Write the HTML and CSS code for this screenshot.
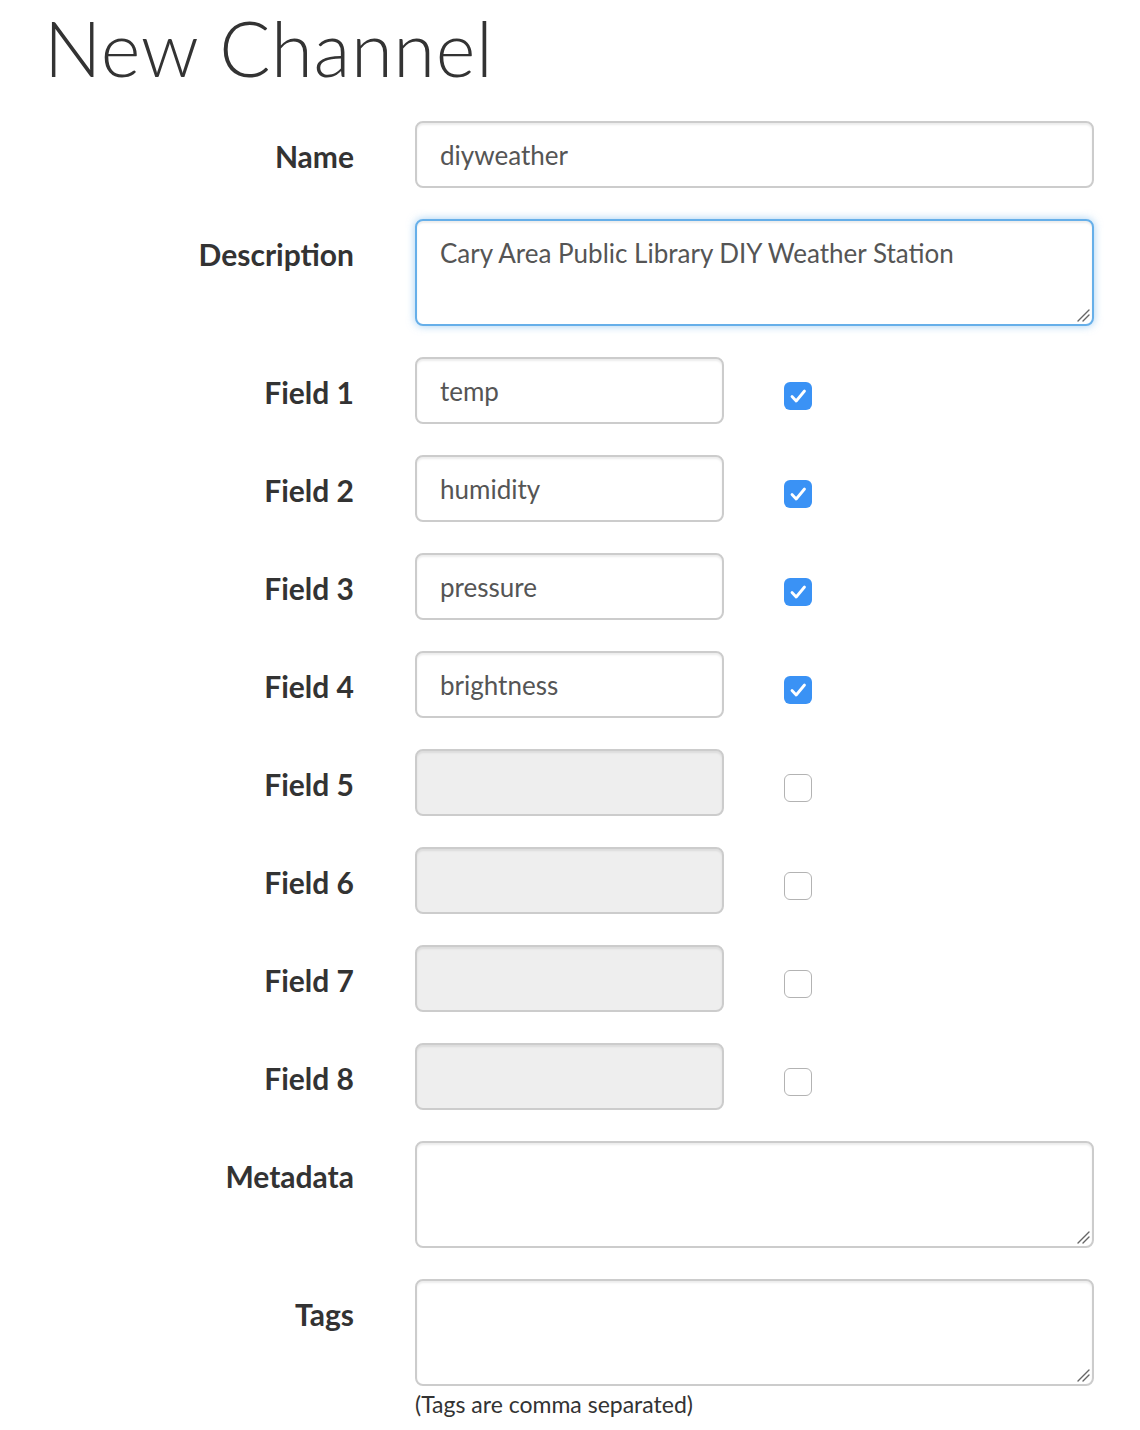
FILE: index.html
```html
<!DOCTYPE html>
<html lang="en">
<head>
<meta charset="utf-8">
<title>New Channel</title>
<link rel="stylesheet" href="styles.css">
</head>
<body>
<div class="page">
  <h1 class="title">New Channel</h1>
  <form class="form">
    <div class="row">
      <label class="label">Name</label>
      <div class="control"><input class="input wide" type="text" value="diyweather"></div>
    </div>
    <div class="row">
      <label class="label">Description</label>
      <div class="control"><div class="area-wrap"><textarea class="input wide area focus">Cary Area Public Library DIY Weather Station</textarea><svg class="grip" viewBox="0 0 14 14" width="14" height="14"><path d="M2 13 L13 2 M7 13 L13 7" stroke="#666" stroke-width="1.4" stroke-linecap="round"/></svg></div></div>
    </div>
    <div class="row">
      <label class="label">Field 1</label>
      <div class="control field"><input class="input short" type="text" value="temp"><span class="check on"><svg viewBox="0 0 28 28" width="28" height="28"><path d="M8 14.5 L12.2 19 L20.5 9" fill="none" stroke="#fff" stroke-width="2.8" stroke-linecap="round" stroke-linejoin="round"/></svg></span></div>
    </div>
    <div class="row">
      <label class="label">Field 2</label>
      <div class="control field"><input class="input short" type="text" value="humidity"><span class="check on"><svg viewBox="0 0 28 28" width="28" height="28"><path d="M8 14.5 L12.2 19 L20.5 9" fill="none" stroke="#fff" stroke-width="2.8" stroke-linecap="round" stroke-linejoin="round"/></svg></span></div>
    </div>
    <div class="row">
      <label class="label">Field 3</label>
      <div class="control field"><input class="input short" type="text" value="pressure"><span class="check on"><svg viewBox="0 0 28 28" width="28" height="28"><path d="M8 14.5 L12.2 19 L20.5 9" fill="none" stroke="#fff" stroke-width="2.8" stroke-linecap="round" stroke-linejoin="round"/></svg></span></div>
    </div>
    <div class="row">
      <label class="label">Field 4</label>
      <div class="control field"><input class="input short" type="text" value="brightness"><span class="check on"><svg viewBox="0 0 28 28" width="28" height="28"><path d="M8 14.5 L12.2 19 L20.5 9" fill="none" stroke="#fff" stroke-width="2.8" stroke-linecap="round" stroke-linejoin="round"/></svg></span></div>
    </div>
    <div class="row">
      <label class="label">Field 5</label>
      <div class="control field"><input class="input short" type="text" disabled><span class="check"></span></div>
    </div>
    <div class="row">
      <label class="label">Field 6</label>
      <div class="control field"><input class="input short" type="text" disabled><span class="check"></span></div>
    </div>
    <div class="row">
      <label class="label">Field 7</label>
      <div class="control field"><input class="input short" type="text" disabled><span class="check"></span></div>
    </div>
    <div class="row">
      <label class="label">Field 8</label>
      <div class="control field"><input class="input short" type="text" disabled><span class="check"></span></div>
    </div>
    <div class="row">
      <label class="label">Metadata</label>
      <div class="control"><div class="area-wrap"><textarea class="input wide area"></textarea><svg class="grip" viewBox="0 0 14 14" width="14" height="14"><path d="M2 13 L13 2 M7 13 L13 7" stroke="#666" stroke-width="1.4" stroke-linecap="round"/></svg></div></div>
    </div>
    <div class="row">
      <label class="label">Tags</label>
      <div class="control"><div class="area-wrap"><textarea class="input wide area"></textarea><svg class="grip" viewBox="0 0 14 14" width="14" height="14"><path d="M2 13 L13 2 M7 13 L13 7" stroke="#666" stroke-width="1.4" stroke-linecap="round"/></svg></div><p class="help">(Tags are comma separated)</p></div>
    </div>
  </form>
</div>
</body>
</html>
```
FILE: styles.css
```css
html, body {
  margin: 0;
  padding: 0;
  background: #fff;
}
body {
  font-family: Lato, "Liberation Sans", sans-serif;
  color: #333;
}
.title {
  font-family: Lato, sans-serif;
  font-weight: 300;
  font-size: 76px;
  line-height: 1;
  color: #333;
  margin: 10px 0 0 44px;
  letter-spacing: 0.6px;
}
.form {
  margin-top: 35px;
  display: flex;
  flex-direction: column;
  gap: 31px;
}
.row {
  display: grid;
  grid-template-columns: 354px 679px;
  column-gap: 61px;
  align-items: start;
}
.label {
  text-align: right;
  font-weight: 700;
  font-size: 30px;
  line-height: 40px;
  padding-top: 15px;
  color: #333;
}
.control {
  display: flex;
  flex-direction: column;
}
.control.field {
  flex-direction: row;
  align-items: flex-start;
}
.input {
  box-sizing: border-box;
  height: 67px;
  border: 2px solid #ccc;
  border-radius: 8px;
  padding: 12px 23px;
  font-family: Lato, "Liberation Sans", sans-serif;
  font-size: 26px;
  line-height: 40px;
  color: #555;
  background: #fff;
  box-shadow: inset 0 2px 2px rgba(0, 0, 0, 0.075);
  margin: 0;
  outline: none;
}
.input:disabled {
  background: #eee;
}
.wide {
  width: 679px;
}
.short {
  width: 309px;
}
.area-wrap {
  position: relative;
  width: 679px;
  height: 107px;
}
.area {
  height: 107px;
  resize: none;
  display: block;
}
.grip {
  position: absolute;
  right: 4px;
  bottom: 4px;
  pointer-events: none;
}
.focus {
  border-color: #66afe9;
  box-shadow: inset 0 2px 2px rgba(0, 0, 0, 0.075), 0 0 8px rgba(102, 175, 233, 0.6);
}
.check {
  box-sizing: border-box;
  width: 28px;
  height: 28px;
  margin: 25px 0 0 60px;
  border: 1.5px solid #b3b3b3;
  border-radius: 6px;
  background: #fff;
  display: block;
}
.check.on {
  background: #3a92f5;
  border: none;
}
.check svg {
  display: block;
}
.help {
  margin: 2px 0 0 0;
  font-size: 23px;
  line-height: 32px;
  color: #333;
}
```
